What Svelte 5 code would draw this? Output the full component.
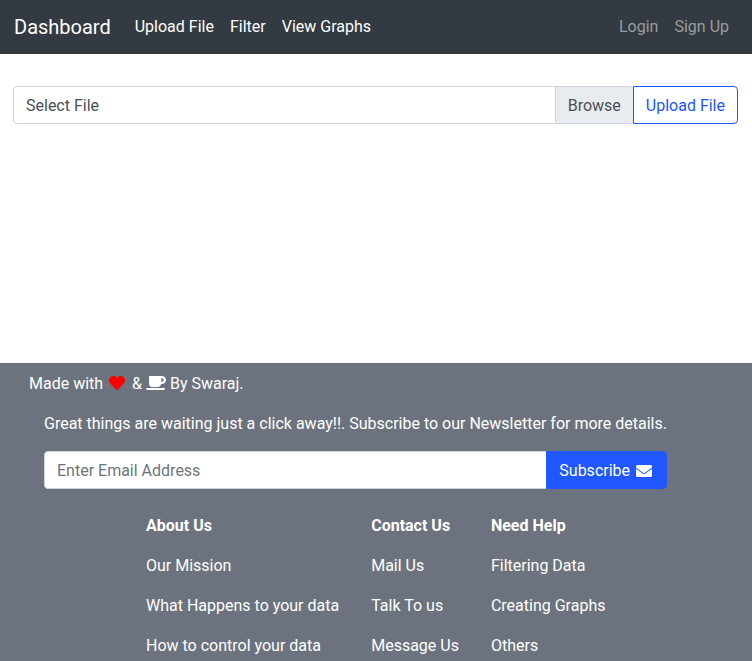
<script>
  const links = ['Upload File', 'Filter', 'View Graphs'];
  const account = ['Login', 'Sign Up'];
  const columns = [
    { title: 'About Us', items: ['Our Mission', 'What Happens to your data', 'How to control your data'] },
    { title: 'Contact Us', items: ['Mail Us', 'Talk To us', 'Message Us'] },
    { title: 'Need Help', items: ['Filtering Data', 'Creating Graphs', 'Others'] },
  ];
</script>

<div class="page">
  <nav class="navbar">
    <a class="brand" href="#top">Dashboard</a>
    <div class="links">
      {#each links as link}<a href="#top">{link}</a>{/each}
    </div>
    <div class="links account">
      {#each account as link}<a href="#top">{link}</a>{/each}
    </div>
  </nav>

  <main>
    <div class="group">
      <div class="file">
        <span class="file-name">Select File</span>
        <span class="browse">Browse</span>
      </div>
      <button class="upload">Upload File</button>
    </div>
  </main>

  <footer>
    <p class="credit">
      Made with
      <svg class="heart" viewBox="0 0 512 512" width="16" height="16"><path fill="currentColor" d="M462.3 62.6C407.5 15.9 326 24.3 275.7 76.2L256 96.5l-19.7-20.3C186.1 24.3 104.5 15.9 49.7 62.6c-62.8 53.6-66.1 149.8-9.9 207.9l193.5 199.8c12.5 12.9 32.8 12.9 45.3 0l193.5-199.8c56.3-58.1 53-154.3-9.8-207.9z" /></svg>
      &amp;
      <svg viewBox="0 0 640 512" width="20" height="16"><path fill="currentColor" d="M192 384h192c53 0 96-43 96-96h32c70.6 0 128-57.4 128-128S582.6 32 512 32H120c-13.3 0-24 10.7-24 24v232c0 53 43 96 96 96zM512 100c30 0 54 26 54 60s-24 58-54 58h-24V100h24zm47.7 380H48.3c-47.6 0-61-64-36-64h583.3c25 0 11.8 64-35.9 64z" /></svg>
      By Swaraj.
    </p>
    <div class="newsletter">
      <p>Great things are waiting just a click away!!. Subscribe to our Newsletter for more details.</p>
      <div class="group">
        <input type="email" placeholder="Enter Email Address" />
        <button class="subscribe">
          Subscribe
          <svg class="mail" viewBox="0 0 512 512" width="16" height="16"><path fill="currentColor" d="M502.3 190.8c3.9-3.1 9.7-.2 9.7 4.7V400c0 26.5-21.5 48-48 48H48c-26.5 0-48-21.5-48-48V195.6c0-5 5.7-7.8 9.7-4.7 22.4 17.4 52.1 39.5 154.1 113.6 21.1 15.4 56.7 47.8 92.2 47.6 35.7.3 72-32.8 92.3-47.6 102-74.1 131.6-96.3 154-113.7zM256 320c23.2.4 56.6-29.2 73.4-41.4 132.7-96.3 142.8-104.7 173.4-128.7 5.8-4.5 9.2-11.5 9.2-18.9v-19c0-26.5-21.5-48-48-48H48c-26.5 0-48 21.5-48 48v19c0 7.4 3.4 14.3 9.2 18.9 30.6 23.9 40.7 32.4 173.4 128.7 16.8 12.2 50.2 41.8 73.4 41.4z" /></svg>
        </button>
      </div>
    </div>
    <div class="columns">
      {#each columns as column}
        <div>
          <p><b>{column.title}</b></p>
          {#each column.items as item}<p>{item}</p>{/each}
        </div>
      {/each}
    </div>
  </footer>
</div>

<style>
  .page {
    display: flex;
    flex-direction: column;
    height: 661px;
    overflow: hidden;
    background: #fff;
    color: #fff;
    font: 16px/24px Roboto, sans-serif;
  }
  .page * { box-sizing: border-box; }
  a { color: inherit; text-decoration: none; }
  p { margin: 0 0 16px; }
  button, input { font: inherit; margin: 0; }
  .navbar {
    display: flex;
    align-items: center;
    flex: none;
    height: 54px;
    padding: 0 15px 0 14px;
    background: #343a42;
  }
  .brand { margin-right: 16px; font-size: 20px; line-height: 30px; }
  .links { display: flex; }
  .links a { padding: 8px; }
  .account { margin-left: auto; color: #999c9f; }
  main { flex: none; height: 309px; padding: 32px 14px 0 13px; }
  .group { display: flex; height: 38px; }
  .file {
    display: flex;
    flex: 1;
    overflow: hidden;
    border: 1px solid #ced4dc;
    border-radius: 4px;
    color: #495057;
  }
  .file-name { flex: 1; padding: 7px 12px 5px; }
  .browse { padding: 7px 12px 5px; background: #e9ecef; border-left: 1px solid #ced4dc; }
  .upload {
    margin-left: -1px;
    padding: 7px 12px 5px;
    position: relative;
    border: 1px solid #2157ff;
    border-radius: 0 4px 4px 0;
    background: #fff;
    color: #2157ff;
  }
  footer { flex: 1; padding: 9px 29px 0; background: #6c737e; }
  svg { width: auto; height: 16px; vertical-align: -2px; overflow: visible; }
  .heart { color: #f00; margin: 0 3px 0 2px; }
  .newsletter { width: 623px; margin-left: 15px; }
  .newsletter p { margin-bottom: 15px; }
  input {
    flex: 1;
    min-width: 0;
    padding: 7px 12px 5px;
    border: 1px solid #ced4dc;
    border-radius: 4px 0 0 4px;
    background: #fff;
  }
  input::placeholder { color: #6c757d; opacity: 1; }
  .subscribe {
    margin-left: -1px;
    padding: 7px 12px 5px;
    position: relative;
    border: 1px solid #2157ff;
    border-radius: 0 4px 4px 0;
    background: #2157ff;
    color: #fff;
  }
  .mail { margin: 0 2px; vertical-align: -3px; }
  .columns { display: flex; gap: 32px; margin: 25px 0 0 117px; }
</style>
